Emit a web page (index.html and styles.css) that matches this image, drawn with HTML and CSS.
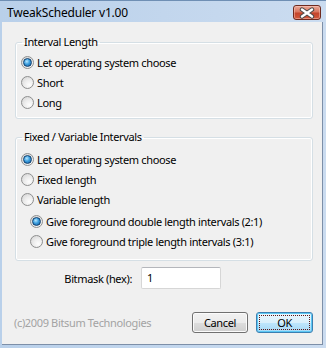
FILE: index.html
```html
<!DOCTYPE html>
<html lang="en">
<head>
  <meta charset="UTF-8">
  <title>TweakScheduler v1.00</title>
<link rel="stylesheet" href="styles.css">
</head>
<body>
  <div class="window">
    <div class="titlebar">
      <span class="title">TweakScheduler v1.00</span>
      <span class="close">
        <svg width="26" height="12" viewBox="0 0 26 12">
          <path d="M8 2.5 L18 9.5 M18 2.5 L8 9.5" stroke="#4a4a4a" stroke-width="4.4" stroke-linecap="round"/>
          <path d="M8 2.5 L18 9.5 M18 2.5 L8 9.5" stroke="#fff" stroke-width="2.4" stroke-linecap="round"/>
        </svg>
      </span>
    </div>

    <div class="client">
      <fieldset class="group">
        <legend>Interval Length</legend>
        <div class="rows first">
          <div class="opt"><span class="radio on"></span>Let operating system choose</div>
          <div class="opt"><span class="radio"></span>Short</div>
          <div class="opt"><span class="radio"></span>Long</div>
        </div>
      </fieldset>

      <fieldset class="group second">
        <legend>Fixed / Variable Intervals</legend>
        <div class="rows">
          <div class="opt"><span class="radio on"></span>Let operating system choose</div>
          <div class="opt"><span class="radio"></span>Fixed length</div>
          <div class="opt"><span class="radio"></span>Variable length</div>
          <div class="sub">
            <div class="opt"><span class="radio on"></span>Give foreground double length intervals (2:1)</div>
            <div class="opt"><span class="radio"></span>Give foreground triple length intervals (3:1)</div>
          </div>
        </div>
      </fieldset>

      <div class="bitmask">
        <label class="bitmask-label">Bitmask (hex):</label>
        <div class="field">1</div>
      </div>

      <div class="footer">
        <span class="copy">(c)2009 Bitsum Technologies</span>
        <button class="btn">Cancel</button>
        <button class="btn default"><span class="focus">OK</span></button>
      </div>
    </div>
  </div>
</body>
</html>
```

FILE: styles.css
```css
* {
  box-sizing: border-box;
}
body {
  margin: 0;
  font-family: "Noto Sans", "Open Sans", sans-serif;
  font-size: 11px;
  letter-spacing: -0.35px;
  color: #000;
  background: #c3d6ec;
}
.window {
  width: 326px;
  height: 348px;
  display: flex;
  flex-direction: column;
  background: linear-gradient(to right, #b9d0ea, #cbdcf0);
  overflow: hidden;
}

/* title bar */
.titlebar {
  height: 22px;
  flex: none;
  display: flex;
  justify-content: space-between;
  padding: 0 5px 0 7px;
  border-top: 1px solid #6f8fb4;
}
.title {
  font-size: 12px;
  letter-spacing: -0.2px;
  line-height: 16px;
  padding-top: 4px;
}
.close {
  margin-top: 4px;
  width: 28px;
  height: 15px;
  border: 1px solid #6e2a1f;
  border-radius: 3px;
  background: linear-gradient(#eaa999 0%, #d9765f 45%, #c4452c 55%, #d3593d 100%);
  box-shadow: inset 0 0 0 1px rgba(255, 210, 200, 0.45);
  display: flex;
  align-items: center;
  justify-content: center;
}

/* client area */
.client {
  flex: 1;
  margin: 0 3px 3px 2px;
  border-right: 1px solid #7d8fa8;
  border-bottom: 1px solid #7d8fa8;
  background: #f0f0f0;
  padding: 12px 9px 11px 13px;
  display: flex;
  flex-direction: column;
}

.group {
  margin: 0;
  padding: 0 0 6px 5px;
  border: 1px solid #d5dfe5;
  border-radius: 3px;
  box-shadow: inset 0 0 0 1px #fff;
}
.group.second {
  margin-top: 10px;
  padding-bottom: 9px;
}
.group legend {
  margin-left: 1px;
  padding: 0 2px;
  line-height: 16px;
}
.rows {
  padding-top: 4px;
}
.rows.first {
  padding-top: 2px;
}
.opt {
  display: flex;
  align-items: center;
  height: 20px;
  gap: 3px;
  white-space: nowrap;
}
.sub {
  margin-top: 2px;
  padding-left: 9px;
}

.radio {
  width: 13px;
  height: 13px;
  flex: none;
  border-radius: 50%;
  border: 1px solid #8e8f8f;
  background: radial-gradient(circle at 65% 70%, #fdfdfd 0%, #ececec 45%, #d0d0d0 100%);
  display: flex;
  align-items: center;
  justify-content: center;
}
.radio.on::after {
  content: "";
  width: 7px;
  height: 7px;
  border-radius: 50%;
  border: 1px solid #0f3f6e;
  background: radial-gradient(circle at 40% 35%, #b7e7ff 0%, #3b9ede 45%, #12579a 100%);
}

/* bitmask */
.bitmask {
  margin-top: 6px;
  display: flex;
  align-items: center;
}
.bitmask-label {
  width: 117px;
  text-align: right;
  margin-right: 9px;
}
.field {
  width: 80px;
  height: 22px;
  background: #fff;
  border: 1px solid #d6d6d6;
  border-top-color: #b4b6bb;
  border-radius: 2px;
  padding: 3px 5px;
  line-height: 14px;
}

/* footer */
.footer {
  margin-top: auto;
  display: flex;
  align-items: center;
}
.copy {
  margin-left: -1px;
  color: #a3a3a3;
  flex: 1;
}
.btn {
  width: 56px;
  height: 21px;
  padding: 0;
  font: inherit;
  font-size: 11px;
  letter-spacing: -0.35px;
  color: #000;
  border: 1px solid #707070;
  border-radius: 3px;
  background: linear-gradient(#f2f2f2 0%, #ebebeb 50%, #dddddd 51%, #cfcfcf 100%);
  box-shadow: inset 0 0 0 1px #fbfbfb;
}
.btn.default {
  margin-left: 8px;
  width: 57px;
  display: flex;
  border-color: #3c7fb1;
  background: linear-gradient(#eaf6fd 0%, #d9f0fc 50%, #bee6fd 51%, #a7d9f5 100%);
  box-shadow: inset 0 0 0 1px #5cc8f5;
}
.focus {
  flex: 1;
  margin: 2px;
  border: 1px dotted #5a1818;
  display: flex;
  align-items: center;
  justify-content: center;
}
```
